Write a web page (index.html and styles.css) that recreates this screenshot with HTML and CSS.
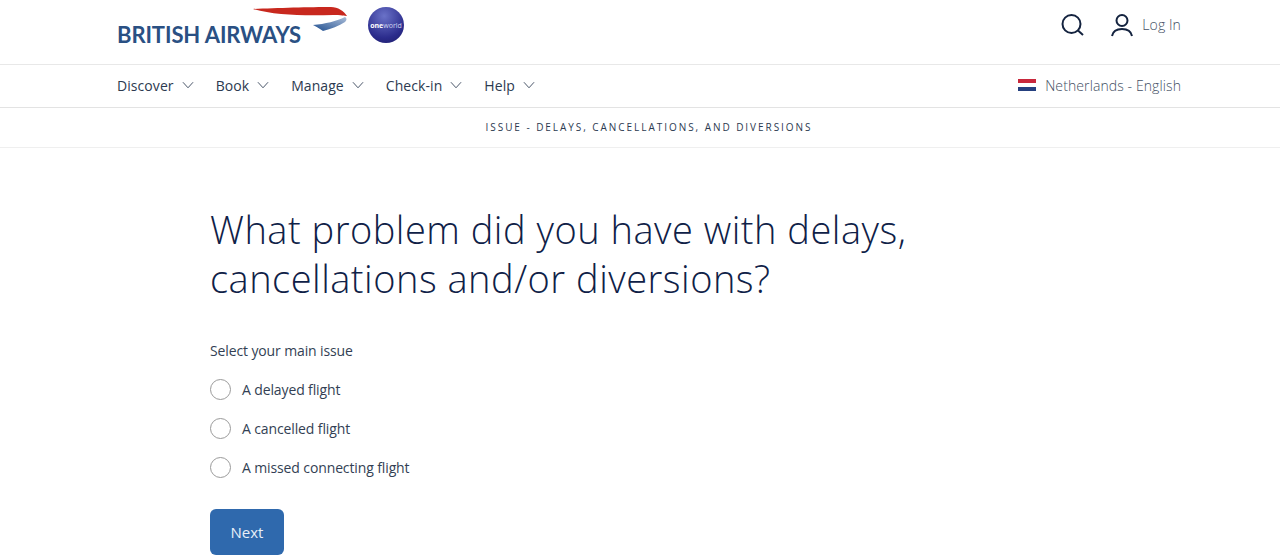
FILE: index.html
```html
<!DOCTYPE html>
<html lang="en">
<head>
    <meta charset="UTF-8">
    <meta name="viewport" content="width=device-width, initial-scale=1.0">
    <title>British Airways - Issue</title>
    <link rel="stylesheet" href="styles.css">
</head>
<body>

    <header class="top-bar">
        <div class="brand">
            <div class="logo">
                <span class="logo-text">BRITISH AIRWAYS</span>
                <svg class="logo-ribbon" width="94" height="24" viewBox="0 0 94 24">
                    <defs>
                        <linearGradient id="ribbonBlue" x1="0" y1="1" x2="1" y2="0">
                            <stop offset="0" stop-color="#1f4e8f"/>
                            <stop offset="1" stop-color="#a9bcd8"/>
                        </linearGradient>
                    </defs>
                    <path d="M0 2 C22 1 58 0 78 0 C85 0 91 4 94 9 C92 9 88 8 80 8 C50 9 20 8 0 2 Z" fill="#c8281e"/>
                    <path d="M60 18 C72 17 84 14 92 10 C94 11 94 13 92 15 C86 19 78 22 70 24 C67 22 64 20 60 18 Z" fill="url(#ribbonBlue)"/>
                </svg>
            </div>
            <div class="oneworld"><span class="one">one</span>world</div>
        </div>
        <div class="user-tools">
            <svg class="search-icon" width="24" height="24" viewBox="0 0 24 24" fill="none" stroke="#14233f" stroke-width="2">
                <circle cx="11.5" cy="11" r="9"/>
                <path d="M18 17.5 L23 22"/>
            </svg>
            <a class="login" href="#">
                <svg width="24" height="24" viewBox="0 0 24 24" fill="none" stroke="#14233f" stroke-width="2">
                    <circle cx="12" cy="7.5" r="5.5"/>
                    <path d="M2 23 C3 18 7 16 12 16 C17 16 21 18 22 23"/>
                </svg>
                <span>Log In</span>
            </a>
        </div>
    </header>

    <nav class="main-nav">
        <ul class="nav-list">
            <li class="nav-item">Discover <svg class="chevron" width="12" height="8" viewBox="0 0 13 8"><path d="M1 1 L6.5 7 L12 1"/></svg></li>
            <li class="nav-item">Book <svg class="chevron" width="12" height="8" viewBox="0 0 13 8"><path d="M1 1 L6.5 7 L12 1"/></svg></li>
            <li class="nav-item">Manage <svg class="chevron" width="12" height="8" viewBox="0 0 13 8"><path d="M1 1 L6.5 7 L12 1"/></svg></li>
            <li class="nav-item">Check-in <svg class="chevron" width="12" height="8" viewBox="0 0 13 8"><path d="M1 1 L6.5 7 L12 1"/></svg></li>
            <li class="nav-item">Help <svg class="chevron" width="12" height="8" viewBox="0 0 13 8"><path d="M1 1 L6.5 7 L12 1"/></svg></li>
        </ul>
        <div class="locale">
            <svg width="18" height="12" viewBox="0 0 18 12">
                <rect width="18" height="4" fill="#c8283c"/>
                <rect y="4" width="18" height="4" fill="#fff"/>
                <rect y="8" width="18" height="4" fill="#25407f"/>
            </svg>
            <span>Netherlands - English</span>
        </div>
    </nav>

    <div class="issue-bar">ISSUE - DELAYS, CANCELLATIONS, AND DIVERSIONS</div>

    <main class="content">
        <h1>What problem did you have with delays,<br>cancellations and/or diversions?</h1>
        <p class="question">Select your main issue</p>
        <div class="options">
            <label class="option"><span class="radio"></span>A delayed flight</label>
            <label class="option"><span class="radio"></span>A cancelled flight</label>
            <label class="option"><span class="radio"></span>A missed connecting flight</label>
        </div>
        <button class="next-btn">Next</button>
    </main>

</body>
</html>
```

FILE: styles.css
```css
* {
    box-sizing: border-box;
}
body {
    margin: 0;
    height: 560px;
    overflow: hidden;
    background: #fff;
    font-family: "Open Sans", Arial, sans-serif;
    color: #1b2b45;
}

/* Header */
.top-bar {
    height: 65px;
    padding: 0 99px 0 117px;
    display: flex;
    justify-content: space-between;
    align-items: center;
    border-bottom: 1px solid #e8e8e8;
}
.brand {
    display: flex;
    align-items: flex-start;
    gap: 21px;
    height: 64px;
    padding-top: 7px;
}
.logo {
    position: relative;
    width: 230px;
    height: 44px;
}
.logo-text {
    display: block;
    margin-top: 14px;
    font-family: Lato, sans-serif;
    font-size: 22px;
    line-height: 28px;
    font-weight: 700;
    letter-spacing: -0.1px;
    color: #2a5083;
    white-space: nowrap;
}
.logo-ribbon {
    position: absolute;
    top: 0;
    right: 0;
}
.oneworld {
    width: 36px;
    height: 36px;
    border-radius: 50%;
    background: radial-gradient(circle at 45% 25%, #6a72c8, #2b2c8c 65%, #1b1a66);
    display: flex;
    align-items: center;
    justify-content: center;
    font-size: 7px;
    color: #cfd3f0;
}
.oneworld .one {
    font-weight: 700;
    color: #fff;
}
.user-tools {
    display: flex;
    align-items: center;
    gap: 26px;
    margin-top: -15px;
}
.login {
    display: flex;
    align-items: center;
    gap: 8px;
    color: #445064;
    font-size: 14px;
    font-weight: 300;
    letter-spacing: 0.1px;
    text-decoration: none;
}

/* Nav */
.main-nav {
    height: 43px;
    padding: 0 99px 2px 117px;
    display: flex;
    justify-content: space-between;
    align-items: center;
    border-bottom: 1px solid #e3e3e3;
}
.nav-list {
    list-style: none;
    margin: 0;
    padding: 0;
    display: flex;
    gap: 22px;
}
.nav-item {
    display: flex;
    align-items: center;
    gap: 8px;
    font-size: 14px;
    letter-spacing: 0.07px;
    color: #2c3a50;
}
.chevron {
    fill: none;
    stroke: #3d4a5e;
    stroke-width: 1;
}
.locale {
    display: flex;
    align-items: center;
    gap: 9px;
    font-size: 14px;
    font-weight: 300;
    letter-spacing: 0.1px;
    color: #445064;
}

/* Issue strip */
.issue-bar {
    height: 40px;
    padding: 0 0 1px 18px;
    display: flex;
    align-items: center;
    justify-content: center;
    font-size: 10px;
    letter-spacing: 1.95px;
    color: #2c3a50;
    border-bottom: 1px solid #efefef;
}

/* Form */
.content {
    padding: 57px 0 0 210px;
}
h1 {
    margin: 0 0 38px;
    font-family: "Open Sans", Arial, sans-serif;
    font-weight: 300;
    font-size: 38px;
    letter-spacing: 0.5px;
    line-height: 49px;
    color: #0f2147;
}
.question {
    margin: 0 0 18px;
    font-size: 14px;
    letter-spacing: -0.12px;
    line-height: 20px;
    color: #333f54;
}
.options {
    display: flex;
    flex-direction: column;
    gap: 18px;
}
.option {
    display: flex;
    align-items: center;
    gap: 11px;
    height: 21px;
    font-size: 14px;
    letter-spacing: -0.12px;
    color: #333f54;
}
.radio {
    width: 21px;
    height: 21px;
    border-radius: 50%;
    border: 1px solid #9a9a9a;
    background: #fff;
}
.next-btn {
    margin: 31px 0 0 0;
    width: 74px;
    height: 46px;
    border: none;
    border-radius: 6px;
    background: #2f69ad;
    color: #e8eff8;
    font-family: "Open Sans", Arial, sans-serif;
    font-size: 15px;
}
```
